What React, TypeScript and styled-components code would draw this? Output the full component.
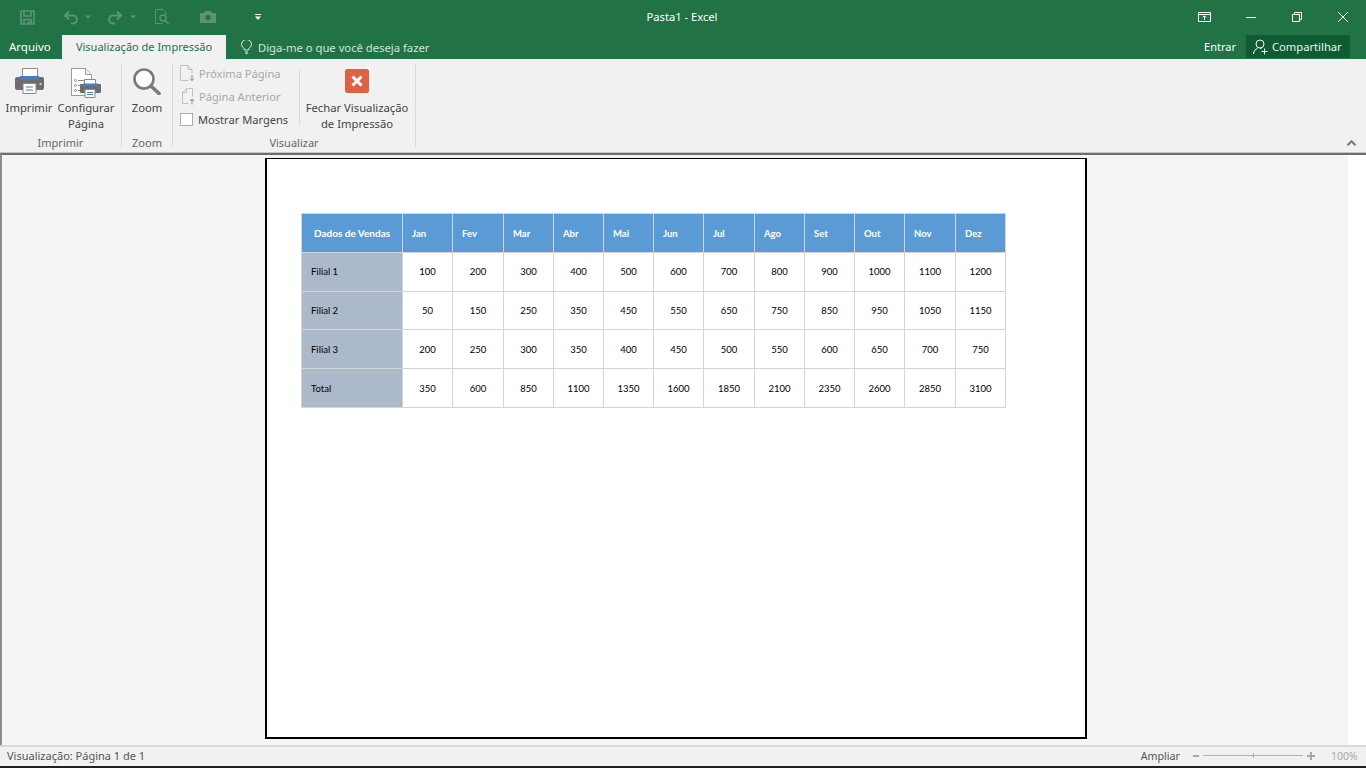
import React from "react";
import styled, { createGlobalStyle } from "styled-components";

const Global = createGlobalStyle`
  html, body { margin: 0; padding: 0; background: #f1f1f1; overflow: hidden; }
  * { box-sizing: border-box; }
`;

const UI = `"Noto Sans", "Open Sans", "Liberation Sans", sans-serif`;

const Shell = styled.div`
  width: 1366px; height: 768px; display: flex; flex-direction: column; overflow: hidden;
  font-family: ${UI}; font-size: 11px; color: #444;
`;
const TitleBar = styled.header`
  height: 35px; background: #217346; display: flex; align-items: center; position: relative; flex: none;
`;
const Qat = styled.div`display: flex; align-items: center; padding-left: 20px; margin-top: -1px;`;
const QatSlot = styled.span<{ $gap: number }>`display: flex; margin-left: ${p => p.$gap}px;`;
const WindowTitle = styled.div`
  position: absolute; left: 0; right: 0; top: 9px; padding-right: 2px; text-align: center; color: #fff; font-size: 11.2px; line-height: 16px;
`;
const WindowControls = styled.div`margin-left: auto; display: flex; align-items: center; padding-right: 18px; margin-top: -1px;`;
const WinSlot = styled.span<{ $gap: number }>`display: flex; margin-left: ${p => p.$gap}px;`;

const TabRow = styled.nav`
  height: 24px; background: #217346; display: flex; align-items: stretch; flex: none; color: #fff;
`;
const FileTab = styled.div`width: 62px; padding-left: 9px; line-height: 24px; font-size: 11.5px;`;
const ActiveTab = styled.div`
  width: 164px; background: #f1f1f1; color: #217346; text-align: center; line-height: 24px; font-size: 11px;
`;
const TellMe = styled.div`
  margin-left: 15px; display: flex; align-items: center; gap: 6px; color: #d3e3da; font-size: 11.25px;
`;
const AccountArea = styled.div`margin-left: auto; display: flex; align-items: flex-start; padding-right: 16px;`;
const SignIn = styled.span`line-height: 24px; margin-right: 10px; font-size: 11px;`;
const ShareButton = styled.div`
  width: 104px; height: 23px; background: #0f5c33; display: flex; align-items: center; gap: 4px; padding-left: 7px; font-size: 11.2px; color: #f0f0f0;
`;

const Ribbon = styled.section`
  height: 93px; background: #f1f1f1; display: flex; padding-top: 4px; flex: none; position: relative;
`;
const Group = styled.div<{ $w: number }>`
  width: ${p => p.$w}px; height: 84px; border-right: 1px solid #dadada; display: flex; flex-direction: column;
`;
const GroupBody = styled.div`flex: 1; display: flex; min-height: 0;`;
const GroupLabel = styled.div`
  height: 11px; line-height: 14px; text-align: center; color: #666; font-size: 11px; flex: none;
`;
const BigButton = styled.div<{ $w: number; $ml?: number }>`
  width: ${p => p.$w}px; margin-left: ${p => p.$ml ?? 0}px; display: flex; flex-direction: column; align-items: center; flex: none;
`;
const BigIcon = styled.div<{ $top?: number }>`
  height: 36px; flex: none; padding-top: ${p => p.$top ?? 5}px; display: flex; align-items: flex-start; justify-content: center;
`;
const BigLabel = styled.div`
  line-height: 16px; text-align: center; color: #444; font-size: 11.25px; white-space: nowrap; padding-top: 1px; flex: none;
`;
const SmallStack = styled.div`width: 119px; margin: -1px 0 0 7px; display: flex; flex-direction: column; flex: none;`;
const SmallRow = styled.div<{ $off?: boolean }>`
  height: 23px; display: flex; align-items: center; gap: 4px; white-space: nowrap; font-size: 11.1px; flex: none;
  color: ${p => (p.$off ? "#a8a8a8" : "#444")};
`;
const CheckBox = styled.span`
  width: 13px; height: 13px; background: #fff; border: 1px solid #ababab; flex: none; margin-right: 1px;
`;
const InnerSep = styled.div`width: 1px; height: 56px; background: #dadada; margin: 6px 0 0 0; flex: none;`;
const Collapse = styled.div`position: absolute; left: 1347px; top: 81px; display: flex;`;

const PreviewArea = styled.main`
  flex: 1; min-height: 0; display: flex; border-top: 1px solid #c6c6c6; background: #f5f5f5;
`;
const Canvas = styled.div`
  flex: 1; border-top: 2px solid #6d6d6d; border-left: 2px solid #8d8d8d; padding: 3px 0 0 263px;
`;
const ScrollTrack = styled.div`width: 18px; background: #fff; border-top: 2px solid #6d6d6d;`;
const Page = styled.div`
  width: 822px; height: 581px; background: #fff; border: solid #000; border-width: 1px 2px 2px 2px; padding: 54px 0 0 34px;
`;
const Sheet = styled.div`
  display: grid; width: 705px;
  grid-template-columns: 101px 50px 51px 50px 50px 50px 50px 51px 50px 50px 50px 51px 50px;
  grid-template-rows: 39px 39px 38px 39px 39px;
  border-top: 1px solid #d4d4d4; border-left: 1px solid #d4d4d4;
  font-family: Lato, "Open Sans", sans-serif; font-size: 9.5px; color: #000;
`;
const Cell = styled.div<{ $kind: "head" | "corner" | "side" | "num"; $lift?: boolean }>`
  border-right: 1px solid #d4d4d4; border-bottom: 1px solid #d4d4d4; display: flex; align-items: center;
  white-space: nowrap; padding-bottom: ${p => (p.$lift ? 2 : 0)}px;
  ${p => p.$kind === "head" && `background:#5b9bd5;color:#fff;font-weight:700;padding-left:9px;`}
  ${p => p.$kind === "corner" && `background:#5b9bd5;color:#fff;font-weight:700;padding-left:12px;font-size:10px;`}
  ${p => p.$kind === "side" && `background:#acb9ca;padding-left:9px;`}
  ${p => p.$kind === "num" && `justify-content:center;background:#fff;`}
`;

const StatusBar = styled.footer`
  height: 23px; flex: none; background: #f1f1f1; border-top: 2px solid #d8d8d8; border-bottom: 2px solid #222;
  display: flex; align-items: center; padding: 0 4px 2px 7px; font-size: 11px; color: #555;
`;
const ZoomArea = styled.div`margin-left: auto; display: flex; align-items: center;`;
const ZoomLabel = styled.span`margin-right: 13px; font-size: 10.7px;`;
const ZoomPct = styled.span`margin-left: 16px; color: #aaa; width: 31px; font-size: 10.4px;`;

/* ---------- icons ---------- */
const Save = () => (
  <svg width="15" height="15" viewBox="0 0 15 15" fill="none" stroke="#5c9479" strokeWidth="1.6">
    <path d="M1 1h13v13H1z" /><path d="M4 1v5h7V1M4 14V9.500h7V14" /><path d="M8.500 11v3" />
  </svg>
);
const Undo = () => (
  <svg width="16" height="15" viewBox="0 0 16 15" fill="none" stroke="#5c9479" strokeWidth="2">
    <path d="M6 1.500 1.800 5.500 6 9.500" /><path d="M2 5.500h8a4 4 0 0 1 0 8H8" />
  </svg>
);
const Redo = () => (
  <svg width="16" height="15" viewBox="0 0 16 15" fill="none" stroke="#5c9479" strokeWidth="2">
    <path d="M10 1.500l4.200 4-4.200 4" /><path d="M14 5.500H6a4 4 0 0 0 0 8h2" />
  </svg>
);
const Caret = () => (
  <svg width="6" height="4" viewBox="0 0 6 4"><path d="M0 .5h6L3 3.500z" fill="#5c9479" /></svg>
);
const PrintPreview = () => (
  <svg width="15" height="16" viewBox="0 0 15 16" fill="none" stroke="#5c9479" strokeWidth="1">
    <path d="M8 .5H.5v14h7M8 .5l3 3v2.500" /><circle cx="8" cy="9" r="3" strokeWidth="1.400" /><path d="M10 11.500l3.500 3.500" strokeWidth="1.600" />
  </svg>
);
const Camera = () => (
  <svg width="16" height="12" viewBox="0 0 16 12">
    <path fillRule="evenodd" fill="#5c9479" d="M0 2h4l1-2h6l1 2h4v10H0zM8 4a2.600 2.600 0 1 0 0 5.200A2.600 2.600 0 0 0 8 4z" />
  </svg>
);
const Customize = () => (
  <svg width="6" height="7" viewBox="0 0 6 7"><path d="M0 0h6v1H0z M0 2.500h6L3 6z" fill="#fff" /></svg>
);
const RibbonDisplay = () => (
  <svg width="13" height="10" viewBox="0 0 13 10" fill="none" stroke="#fff">
    <path d="M.5.5h12v9H.5zM.5 2.500h12M6.500 8V4M4.700 5.500l1.800-1.800 1.800 1.800" />
  </svg>
);
const Minimize = () => <svg width="10" height="10" viewBox="0 0 10 10"><path d="M0 5.500h10" stroke="#fff" /></svg>;
const Restore = () => (
  <svg width="10" height="10" viewBox="0 0 10 10" fill="none" stroke="#fff">
    <path d="M.5 2.500h7v7h-7zM2.500 2.500v-2h7v7h-2" />
  </svg>
);
const Close = () => (
  <svg width="10" height="10" viewBox="0 0 10 10" fill="none" stroke="#fff"><path d="M0 0l10 10M10 0L0 10" /></svg>
);
const Bulb = () => (
  <svg width="11" height="14" viewBox="0 0 11 14" fill="none" stroke="#e6efe9">
    <path d="M3.500 10c0-2-3-3-3-5.500a5 5 0 0 1 10 0c0 2.500-3 3.500-3 5.500zM4 12h3M4.500 13.500h2" />
  </svg>
);
const Person = () => (
  <svg width="15" height="16" viewBox="0 0 15 16" fill="none" stroke="#fff">
    <circle cx="7" cy="5" r="4" /><path d="M.5 15c0-3 2-5 4-5.500M7 9.500h1.500M11.500 9.500v6M8.500 12.500h6" />
  </svg>
);
const Printer = () => (
  <svg width="29" height="26" viewBox="0 0 29 26">
    <path d="M7.500.5h15v9h-15z" fill="#fff" stroke="#8a8a8a" />
    <rect x="0" y="9" width="29" height="13" rx="2" fill="#6d6d6d" />
    <rect x="5" y="8" width="19" height="4" fill="#4a7ebb" />
    <rect x="24.500" y="15" width="2" height="2" fill="#d0d0d0" />
    <path d="M8 15.500h13v10H8z" fill="#fff" stroke="#8a8a8a" />
    <path d="M11 19h7M11 22h7" stroke="#4a7ebb" />
  </svg>
);
const PageSetup = () => (
  <svg width="31" height="30" viewBox="0 0 31 30">
    <path d="M.5.500h14l6 6v21H.5z" fill="#fff" stroke="#9a9a9a" />
    <path d="M14.500.500v6h6" fill="#eee" stroke="#9a9a9a" />
    <g fill="none" stroke="#8a8a8a"><circle cx="4.500" cy="12.500" r="1" /><circle cx="4.500" cy="17.500" r="1" /><circle cx="4.500" cy="22.500" r="1" /><path d="M7 12.500h6M7 17.500h2M7 22.500h2" /></g>
    <path d="M13.500 11.500h11v6h-11z" fill="#fff" stroke="#8a8a8a" />
    <rect x="9" y="16" width="21" height="9" rx="1" fill="#6d6d6d" />
    <rect x="12" y="15.500" width="15" height="3" fill="#4a7ebb" />
    <path d="M14 21.500h10v8H14z" fill="#fff" stroke="#8a8a8a" />
    <path d="M16 24.500h6M16 26.500h6" stroke="#4a7ebb" />
  </svg>
);
const Magnifier = () => (
  <svg width="28" height="27" viewBox="0 0 28 27" fill="none" stroke="#7a7a7a">
    <circle cx="11" cy="11" r="9.500" strokeWidth="2.600" fill="#fff" />
    <path d="M18 18l8 7.500" strokeWidth="3.600" strokeLinecap="round" />
  </svg>
);
const NextPage = () => (
  <svg width="15" height="17" viewBox="0 0 15 17" fill="none" stroke="#c2c2c2">
    <path d="M.5.500h7.500l4 4v4M8 .5v4h4M8.500 15.500h-8V.5" /><path d="M12 10v5.500M10 13.500l2 2 2-2" stroke="#8c8c8c" />
  </svg>
);
const PrevPage = () => (
  <svg width="15" height="17" viewBox="0 0 15 17" fill="none" stroke="#c2c2c2">
    <path d="M2.500 15.500v-11l4-4h6v8M6.500.5v4h-4M2.500 15.500h6" /><path d="M12 16.500V11M10 13l2-2 2 2" stroke="#8c8c8c" />
  </svg>
);
const CloseTile = () => (
  <svg width="24" height="24" viewBox="0 0 24 24">
    <rect width="24" height="24" rx="2.500" fill="#dd6342" />
    <path d="M7.500 7.500l9 9M16.500 7.500l-9 9" stroke="#fff" strokeWidth="3" />
  </svg>
);
const Chevron = () => (
  <svg width="9" height="6" viewBox="0 0 9 6" fill="none" stroke="#7a7a7a" strokeWidth="2"><path d="M.5 5.200l4-4 4 4" /></svg>
);
const ZoomBar = styled.div`display: flex; align-items: center;`;
const SliderTrack = styled.div`
  width: 100px; height: 1px; background: #b0b0b0; margin: 0 4px; position: relative;
  &::after { content: ""; position: absolute; left: 50px; top: -2px; width: 1px; height: 5px; background: #b0b0b0; }
`;
const ZoomMinus = () => <svg width="6" height="2" viewBox="0 0 6 2"><path d="M0 1h6" stroke="#a8a8a8" strokeWidth="2" /></svg>;
const ZoomPlus = () => <svg width="8" height="8" viewBox="0 0 8 8"><path d="M0 4h8M4 0v8" stroke="#a8a8a8" strokeWidth="2" /></svg>;

/* ---------- data ---------- */
const months = ["Jan","Fev","Mar","Abr","Mai","Jun","Jul","Ago","Set","Out","Nov","Dez"];
const rows: [string, number[]][] = [
  ["Filial 1", [100,200,300,400,500,600,700,800,900,1000,1100,1200]],
  ["Filial 2", [50,150,250,350,450,550,650,750,850,950,1050,1150]],
  ["Filial 3", [200,250,300,350,400,450,500,550,600,650,700,750]],
  ["Total", [350,600,850,1100,1350,1600,1850,2100,2350,2600,2850,3100]],
];

export default function App() {
  return (
    <Shell>
      <Global />
      <TitleBar>
        <Qat>
          <Save />
          <QatSlot $gap={28}><Undo /></QatSlot>
          <QatSlot $gap={6}><Caret /></QatSlot>
          <QatSlot $gap={16}><Redo /></QatSlot>
          <QatSlot $gap={7}><Caret /></QatSlot>
          <QatSlot $gap={19}><PrintPreview /></QatSlot>
          <QatSlot $gap={30}><Camera /></QatSlot>
          <QatSlot $gap={39}><Customize /></QatSlot>
        </Qat>
        <WindowTitle>Pasta1 - Excel</WindowTitle>
        <WindowControls>
          <RibbonDisplay />
          <WinSlot $gap={35}><Minimize /></WinSlot>
          <WinSlot $gap={36}><Restore /></WinSlot>
          <WinSlot $gap={36}><Close /></WinSlot>
        </WindowControls>
      </TitleBar>
      <TabRow>
        <FileTab>Arquivo</FileTab>
        <ActiveTab>Visualização de Impressão</ActiveTab>
        <TellMe><Bulb /><span>Diga-me o que você deseja fazer</span></TellMe>
        <AccountArea>
          <SignIn>Entrar</SignIn>
          <ShareButton><Person /><span>Compartilhar</span></ShareButton>
        </AccountArea>
      </TabRow>
      <Ribbon>
        <Group $w={122}>
          <GroupBody>
            <BigButton $w={50} $ml={4}><BigIcon><Printer /></BigIcon><BigLabel>Imprimir</BigLabel></BigButton>
            <BigButton $w={62} $ml={1}><BigIcon><PageSetup /></BigIcon><BigLabel>Configurar<br />Página</BigLabel></BigButton>
          </GroupBody>
          <GroupLabel>Imprimir</GroupLabel>
        </Group>
        <Group $w={51}>
          <GroupBody>
            <BigButton $w={50}><BigIcon><Magnifier /></BigIcon><BigLabel>Zoom</BigLabel></BigButton>
          </GroupBody>
          <GroupLabel>Zoom</GroupLabel>
        </Group>
        <Group $w={243}>
          <GroupBody>
            <SmallStack>
              <SmallRow $off><NextPage /><span>Próxima Página</span></SmallRow>
              <SmallRow $off><PrevPage /><span>Página Anterior</span></SmallRow>
              <SmallRow><CheckBox /><span>Mostrar Margens</span></SmallRow>
            </SmallStack>
            <InnerSep />
            <BigButton $w={112} $ml={1}><BigIcon $top={6}><CloseTile /></BigIcon><BigLabel>Fechar Visualização<br />de Impressão</BigLabel></BigButton>
          </GroupBody>
          <GroupLabel>Visualizar</GroupLabel>
        </Group>
        <Collapse><Chevron /></Collapse>
      </Ribbon>
      <PreviewArea>
        <Canvas>
          <Page>
            <Sheet>
              <Cell $kind="corner">Dados de Vendas</Cell>
              {months.map(m => <Cell key={m} $kind="head">{m}</Cell>)}
              {rows.map(([name, vals], r) => (
                <React.Fragment key={name}>
                  <Cell $kind="side" $lift={r === 0}>{name}</Cell>
                  {vals.map((v, i) => <Cell key={i} $kind="num" $lift={r === 0}>{v}</Cell>)}
                </React.Fragment>
              ))}
            </Sheet>
          </Page>
        </Canvas>
        <ScrollTrack />
      </PreviewArea>
      <StatusBar>
        <span>Visualização: Página 1 de 1</span>
        <ZoomArea>
          <ZoomLabel>Ampliar</ZoomLabel>
          <ZoomBar><ZoomMinus /><SliderTrack /><ZoomPlus /></ZoomBar>
          <ZoomPct>100%</ZoomPct>
        </ZoomArea>
      </StatusBar>
    </Shell>
  );
}
